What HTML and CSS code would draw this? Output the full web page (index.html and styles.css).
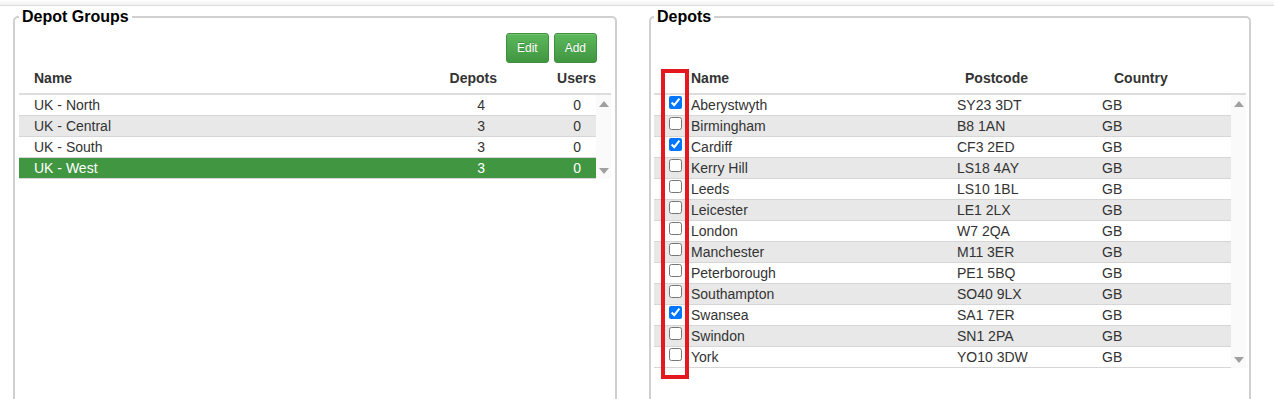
FILE: index.html
```html
<!DOCTYPE html>
<html>
<head>
<meta charset="utf-8">
<link rel="stylesheet" href="styles.css">
</head>
<body>
<div class="topbar"></div>
<div class="panels">
  <fieldset class="panel panel-groups">
    <legend>Depot Groups</legend>
    <div class="toolbar">
      <button class="btn">Edit</button>
      <button class="btn">Add</button>
    </div>
    <div class="grid">
      <div class="thead groups-head">
        <div class="th">Name</div>
        <div class="th num">Depots</div>
        <div class="th num">Users</div>
      </div>
      <div class="tbody">
        <div class="rows">
          <div class="row groups-row"><div class="td name">UK - North</div><div class="td num">4</div><div class="td num">0</div></div>
          <div class="row groups-row alt"><div class="td name">UK - Central</div><div class="td num">3</div><div class="td num">0</div></div>
          <div class="row groups-row"><div class="td name">UK - South</div><div class="td num">3</div><div class="td num">0</div></div>
          <div class="row groups-row selected"><div class="td name">UK - West</div><div class="td num">3</div><div class="td num">0</div></div>
        </div>
        <div class="scrollbar"><span class="arrow up"></span><span class="arrow down"></span></div>
      </div>
    </div>
  </fieldset>

  <fieldset class="panel panel-depots">
    <legend>Depots</legend>
    <div class="toolbar"></div>
    <div class="grid">
      <div class="thead depots-head">
        <div class="th"></div>
        <div class="th">Name</div>
        <div class="th">Postcode</div>
        <div class="th">Country</div>
      </div>
      <div class="tbody">
        <div class="rows">
          <div class="row depots-row"><div class="td chk"><input type="checkbox" checked></div><div class="td">Aberystwyth</div><div class="td">SY23 3DT</div><div class="td">GB</div></div>
          <div class="row depots-row alt"><div class="td chk"><input type="checkbox"></div><div class="td">Birmingham</div><div class="td">B8 1AN</div><div class="td">GB</div></div>
          <div class="row depots-row"><div class="td chk"><input type="checkbox" checked></div><div class="td">Cardiff</div><div class="td">CF3 2ED</div><div class="td">GB</div></div>
          <div class="row depots-row alt"><div class="td chk"><input type="checkbox"></div><div class="td">Kerry Hill</div><div class="td">LS18 4AY</div><div class="td">GB</div></div>
          <div class="row depots-row"><div class="td chk"><input type="checkbox"></div><div class="td">Leeds</div><div class="td">LS10 1BL</div><div class="td">GB</div></div>
          <div class="row depots-row alt"><div class="td chk"><input type="checkbox"></div><div class="td">Leicester</div><div class="td">LE1 2LX</div><div class="td">GB</div></div>
          <div class="row depots-row"><div class="td chk"><input type="checkbox"></div><div class="td">London</div><div class="td">W7 2QA</div><div class="td">GB</div></div>
          <div class="row depots-row alt"><div class="td chk"><input type="checkbox"></div><div class="td">Manchester</div><div class="td">M11 3ER</div><div class="td">GB</div></div>
          <div class="row depots-row"><div class="td chk"><input type="checkbox"></div><div class="td">Peterborough</div><div class="td">PE1 5BQ</div><div class="td">GB</div></div>
          <div class="row depots-row alt"><div class="td chk"><input type="checkbox"></div><div class="td">Southampton</div><div class="td">SO40 9LX</div><div class="td">GB</div></div>
          <div class="row depots-row"><div class="td chk"><input type="checkbox" checked></div><div class="td">Swansea</div><div class="td">SA1 7ER</div><div class="td">GB</div></div>
          <div class="row depots-row alt"><div class="td chk"><input type="checkbox"></div><div class="td">Swindon</div><div class="td">SN1 2PA</div><div class="td">GB</div></div>
          <div class="row depots-row"><div class="td chk"><input type="checkbox"></div><div class="td">York</div><div class="td">YO10 3DW</div><div class="td">GB</div></div>
        </div>
        <div class="scrollbar"><span class="arrow up"></span><span class="arrow down"></span></div>
      </div>
      <div class="highlight"></div>
    </div>
  </fieldset>
</div>
</body>
</html>
```

FILE: styles.css
```css
html, body {
  margin: 0;
  padding: 0;
  background: #fff;
  font-family: "Liberation Sans", Arial, sans-serif;
  font-size: 14px;
  color: #333;
  overflow: hidden;
}

.topbar {
  height: 5px;
  background: linear-gradient(#ffffff, #f1f1f1);
  border-bottom: 1px solid #dcdcdc;
}

.panels {
  display: flex;
  gap: 32px;
  margin: 2px 0 0 13px;
}

.panel {
  margin: 0;
  border: 2px solid #d0d0d0;
  border-radius: 5px;
  height: 400px;
  box-sizing: border-box;
  min-width: 0;
}

.panel-groups {
  width: 604px;
  padding: 0 4px;
}

.panel-depots {
  width: 602px;
  padding: 0 3px;
}

.panel legend {
  font-size: 16px;
  font-weight: bold;
  line-height: 18px;
  color: #000;
  padding: 0 3px;
}

.toolbar {
  display: flex;
  justify-content: flex-end;
  gap: 5px;
  height: 37px;
  box-sizing: border-box;
  padding: 7px 14px 0 0;
}

.btn {
  font-family: "Liberation Sans", Arial, sans-serif;
  font-size: 12px;
  line-height: 18px;
  padding: 5px 10px;
  color: #fff;
  border: 1px solid #3e8f3e;
  border-radius: 3px;
  background: linear-gradient(to bottom, #5cb85c 0%, #419641 100%);
  text-shadow: 0 -1px 0 rgba(0, 0, 0, 0.2);
  box-shadow: inset 0 1px 0 rgba(255, 255, 255, 0.15);
  cursor: pointer;
}

.grid {
  position: relative;
}

.thead {
  display: grid;
  height: 30px;
  align-items: center;
  border-bottom: 2px solid #dddddd;
  font-weight: bold;
}

.groups-head {
  grid-template-columns: 1fr 100px 99px;
}

.groups-head .th:first-child {
  padding-left: 15px;
}

.th.num, .td.num {
  text-align: right;
  padding-right: 15px;
}

.depots-head {
  grid-template-columns: 37px 274px 149px 1fr;
}

.tbody {
  display: flex;
}

.rows {
  flex: 1;
  min-width: 0;
}

.row {
  display: grid;
  height: 20px;
  line-height: 20px;
  border-bottom: 1px solid #d6d6d6;
  background: #fff;
}

.row.alt {
  background: #e8e8e8;
}

.row.selected {
  background: #419641;
  color: #fff;
}

.groups-row {
  grid-template-columns: 1fr 100px 96px;
}

.groups-row .td.name {
  padding-left: 15px;
}

.depots-row {
  grid-template-columns: 34px 266px 145px 1fr;
}

.depots-row .td {
  padding-left: 3px;
  white-space: nowrap;
}

.depots-row .td.chk {
  padding-left: 15px;
  display: flex;
  align-items: flex-start;
}

.td.chk input {
  margin: 1px 0 0 0;
  width: 13px;
  height: 13px;
}

.scrollbar {
  width: 15px;
  background: #fafafa;
  display: flex;
  flex-direction: column;
  justify-content: space-between;
  align-items: center;
  padding: 6px 0 5px;
  box-sizing: border-box;
}

.arrow {
  display: block;
  width: 0;
  height: 0;
  border-left: 5px solid transparent;
  border-right: 5px solid transparent;
}

.arrow.up {
  border-bottom: 6px solid #a0a0a0;
}

.arrow.down {
  border-top: 6px solid #a0a0a0;
}

.highlight {
  position: absolute;
  left: 7px;
  top: 6px;
  width: 28px;
  height: 310px;
  box-sizing: border-box;
  border: 4px solid #e3191f;
  pointer-events: none;
}
```
